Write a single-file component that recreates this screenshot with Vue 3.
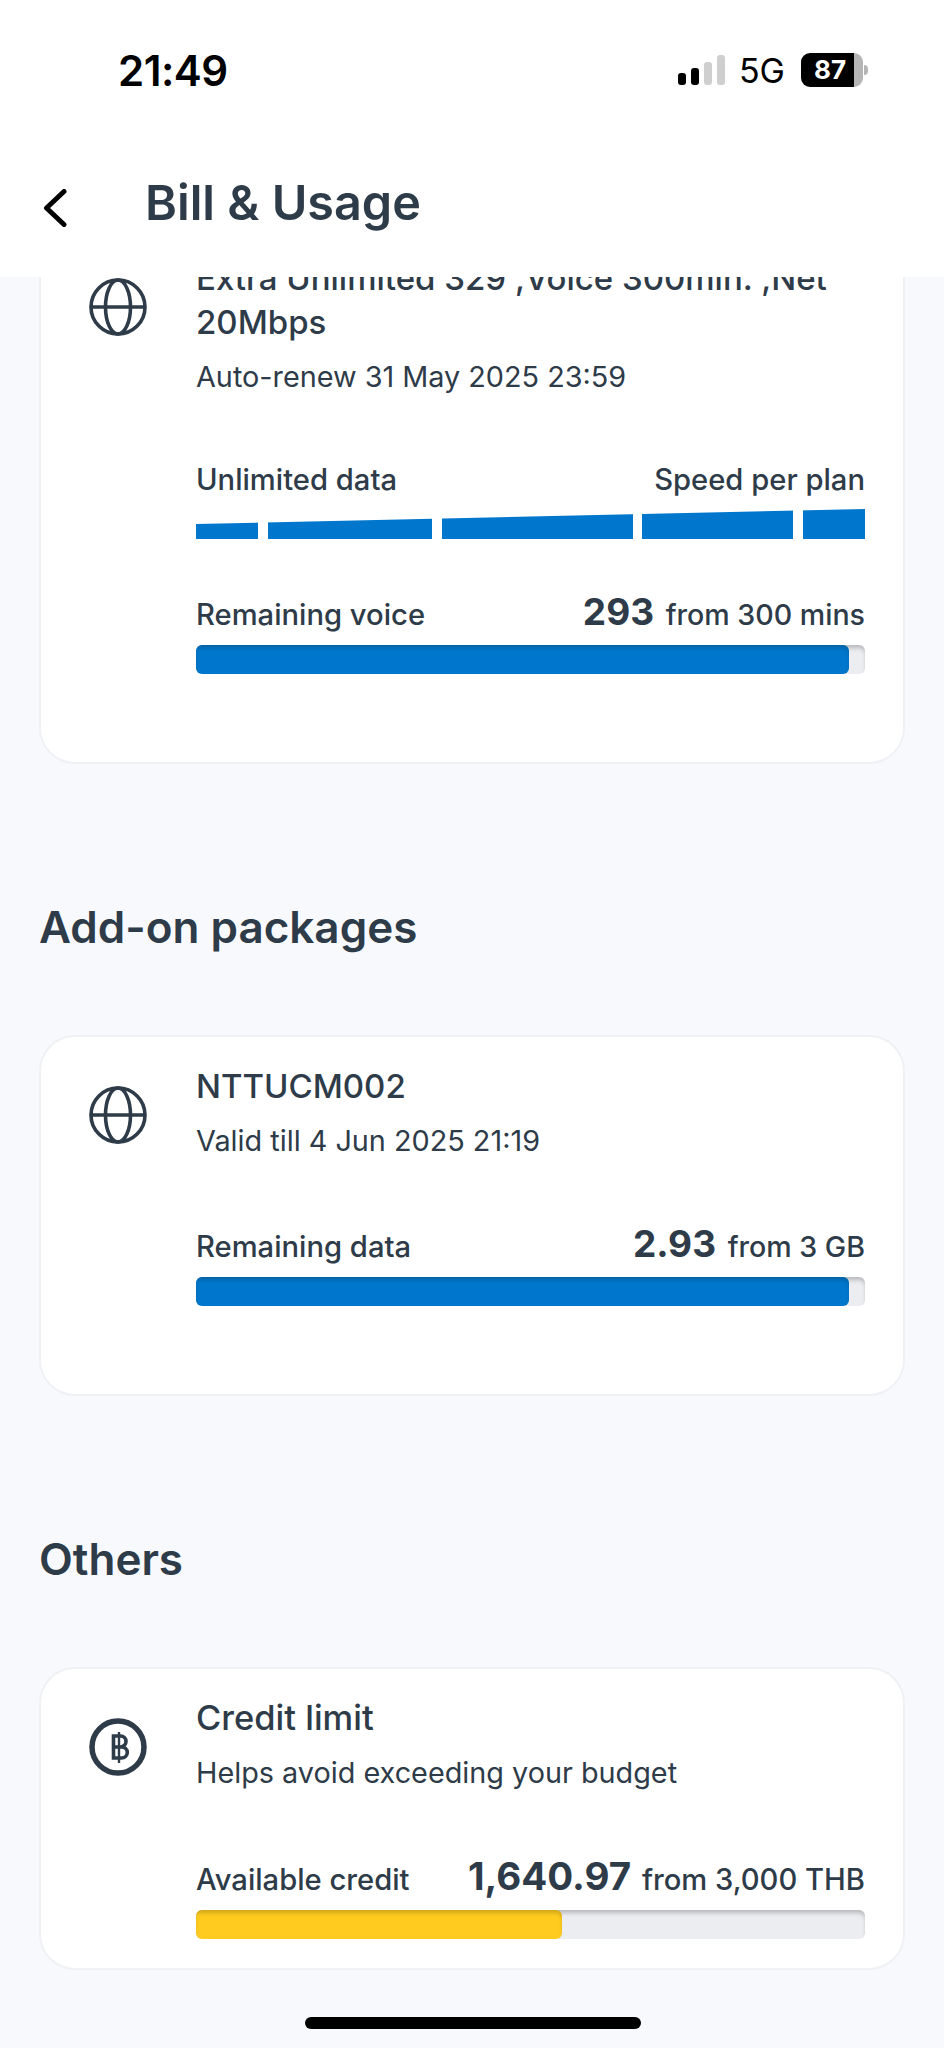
<template>
  <div class="page">
    <header class="top">
      <div class="status">
        <span class="time">21:49</span>
        <div class="status-right">
          <div class="signal">
            <i class="on h1"></i>
            <i class="on h2"></i>
            <i class="h3"></i>
            <i class="h4"></i>
          </div>
          <span class="net">5G</span>
          <div class="battery">
            <div class="battery-body">87</div>
            <div class="battery-tip"></div>
          </div>
        </div>
      </div>
      <div class="nav">
        <svg class="back" viewBox="0 0 24 38" fill="none">
          <path d="M21 2.5 3.5 19 21 35.5" stroke="#000" stroke-width="5" stroke-linecap="round" stroke-linejoin="round" />
        </svg>
        <h1>Bill &amp; Usage</h1>
      </div>
    </header>

    <main class="scroll">
      <section class="card card-main">
        <svg class="icon" viewBox="0 0 58 58" fill="none" stroke="#2e3b48" stroke-width="3.6">
          <circle cx="29" cy="29" r="27" />
          <ellipse cx="29" cy="29" rx="12.5" ry="27" />
          <path d="M2 29h54" />
        </svg>
        <div class="body">
          <div class="title">Extra Unlimited 329 ,Voice 300min. ,Net 20Mbps</div>
          <div class="sub">Auto-renew 31 May 2025 23:59</div>
          <div class="row row-first">
            <span>Unlimited data</span>
            <span>Speed per plan</span>
          </div>
          <div class="wedge">
            <i v-for="w in segments" :key="w" :style="{ width: w + 'px' }"></i>
          </div>
          <div class="row row-voice">
            <span>Remaining voice</span>
            <span class="amount"><b>293</b> from 300 mins</span>
          </div>
          <div class="bar"><div class="fill" :style="{ width: '97.6%' }"></div></div>
        </div>
      </section>

      <h2>Add-on packages</h2>
      <section class="card">
        <svg class="icon" viewBox="0 0 58 58" fill="none" stroke="#2e3b48" stroke-width="3.6">
          <circle cx="29" cy="29" r="27" />
          <ellipse cx="29" cy="29" rx="12.5" ry="27" />
          <path d="M2 29h54" />
        </svg>
        <div class="body">
          <div class="title">NTTUCM002</div>
          <div class="sub">Valid till 4 Jun 2025 21:19</div>
          <div class="row row-gap">
            <span>Remaining data</span>
            <span class="amount"><b>2.93</b> from 3 GB</span>
          </div>
          <div class="bar"><div class="fill" :style="{ width: '97.6%' }"></div></div>
        </div>
      </section>

      <h2>Others</h2>
      <section class="card card-credit">
        <svg class="icon" viewBox="0 0 58 58" fill="none" stroke="#2e3b48">
          <circle cx="29" cy="29" r="26" stroke-width="5.5" />
          <path d="M24.500 18h7a5.200 5.200 0 0 1 0 11h-7h8a5.800 5.500 0 0 1 0 11h-8z" stroke-width="3.600" />
          <path d="M30 14v31" stroke-width="2.400" />
        </svg>
        <div class="body">
          <div class="title title-credit">Credit limit</div>
          <div class="sub">Helps avoid exceeding your budget</div>
          <div class="row row-gap">
            <span>Available credit</span>
            <span class="amount-credit"><b>1,640.97</b> from 3,000 THB</span>
          </div>
          <div class="bar"><div class="fill yellow" :style="{ width: '54.700%' }"></div></div>
        </div>
      </section>
    </main>

    <div class="home"></div>
  </div>
</template>

<script setup>
const segments = [62, 164, 191, 151, 62]
</script>

<style>
html, body {
  margin: 0;
  background: #f8f9fc;
}
</style>

<style scoped>
.page {
  width: 944px;
  height: 2048px;
  position: relative;
  display: flex;
  flex-direction: column;
  overflow: hidden;
  background: #f8f9fc;
  color: #2e3b48;
  font-family: Inter, "Liberation Sans", sans-serif;
}

.top {
  height: 277px;
  flex-shrink: 0;
  background: #fff;
}

.status {
  display: flex;
  justify-content: space-between;
  align-items: center;
  padding: 50px 76px 0 118px;
  height: 40px;
}

.time {
  font-size: 42px;
  font-weight: 600;
  color: #000;
  letter-spacing: -0.5px;
}

.status-right {
  display: flex;
  align-items: center;
}

.signal {
  display: flex;
  align-items: flex-end;
  gap: 5px;
  height: 30px;
  margin-right: 14px;
}

.signal i {
  width: 8px;
  background: #cfcfcf;
  border-radius: 3px;
}

.signal .on { background: #000; }
.signal .h1 { height: 12px; }
.signal .h2 { height: 17px; }
.signal .h3 { height: 23px; }
.signal .h4 { height: 30px; }

.net {
  font-size: 34px;
  color: #000;
  margin-right: 16px;
}

.battery {
  display: flex;
  align-items: center;
}

.battery-body {
  width: 62px;
  height: 34px;
  border-radius: 9px;
  background: linear-gradient(to right, #000 85%, #b5b5b5 85%);
  color: #fff;
  font-size: 26px;
  font-weight: 700;
  line-height: 34px;
  padding-left: 13px;
  box-sizing: border-box;
}

.battery-tip {
  width: 4px;
  height: 10px;
  margin-left: 1px;
  background: #b5b5b5;
  border-radius: 0 5px 5px 0;
}

.nav {
  display: flex;
  align-items: center;
  padding: 86px 0 0 43px;
}

.back {
  width: 24px;
  height: 38px;
  margin-top: 10px;
}

.nav h1 {
  margin: 0 0 0 78px;
  font-size: 48.500px;
  font-weight: 600;
  line-height: 54px;
}

.scroll {
  flex: 1;
  min-height: 0;
  overflow: hidden;
  padding: 0 39px;
}

.card {
  display: flex;
  gap: 49px;
  padding: 27px 38px 88px 48px;
  background: #fff;
  border: 2px solid #eff1f4;
  border-radius: 36px;
}

.card-main {
  margin-top: -50px;
}

.card-credit {
  padding-bottom: 29px;
}

.icon {
  width: 58px;
  height: 58px;
  flex-shrink: 0;
  margin-top: 22px;
}

.body {
  flex: 1;
  min-width: 0;
}

.title {
  font-size: 33px;
  font-weight: 500;
  line-height: 44px;
}

.title-credit {
  font-size: 34.500px;
}

.sub {
  font-size: 28.800px;
  line-height: 36px;
  margin-top: 15px;
}

.row {
  display: flex;
  justify-content: space-between;
  align-items: baseline;
  font-size: 29.200px;
  font-weight: 500;
  line-height: 40px;
}

.row-first {
  margin-top: 65px;
}

.row-gap {
  margin-top: 65px;
}

.row-voice {
  margin-top: 53px;
}

.amount {
  font-size: 28.600px;
}

.amount b {
  font-size: 37px;
  font-weight: 700;
  margin-right: 4px;
}

.amount-credit b {
  font-size: 38.500px;
  font-weight: 700;
  margin-right: 3px;
}

.wedge {
  display: flex;
  justify-content: space-between;
  height: 30px;
  margin-top: 9px;
  clip-path: polygon(0 15px, 100% 0, 100% 100%, 0 100%);
}

.wedge i {
  background: #0077cc;
}

.bar {
  height: 29px;
  margin-top: 10px;
  background: #ebedf0;
  border-radius: 6px;
  overflow: hidden;
  box-shadow: inset 0 4px 4px -1px rgba(0, 0, 0, 0.22);
}

.fill {
  height: 100%;
  background: #0077cc;
  border-radius: 0 6px 6px 0;
  box-shadow: inset 0 4px 4px -1px rgba(0, 0, 0, 0.18);
}

.fill.yellow {
  background: #ffcb1f;
}

h2 {
  margin: 138px 0 83px 0;
  font-size: 44px;
  font-weight: 600;
  line-height: 50px;
}

.home {
  position: absolute;
  left: 305px;
  bottom: 19px;
  width: 336px;
  height: 12px;
  background: #000;
  border-radius: 6px;
}
</style>
